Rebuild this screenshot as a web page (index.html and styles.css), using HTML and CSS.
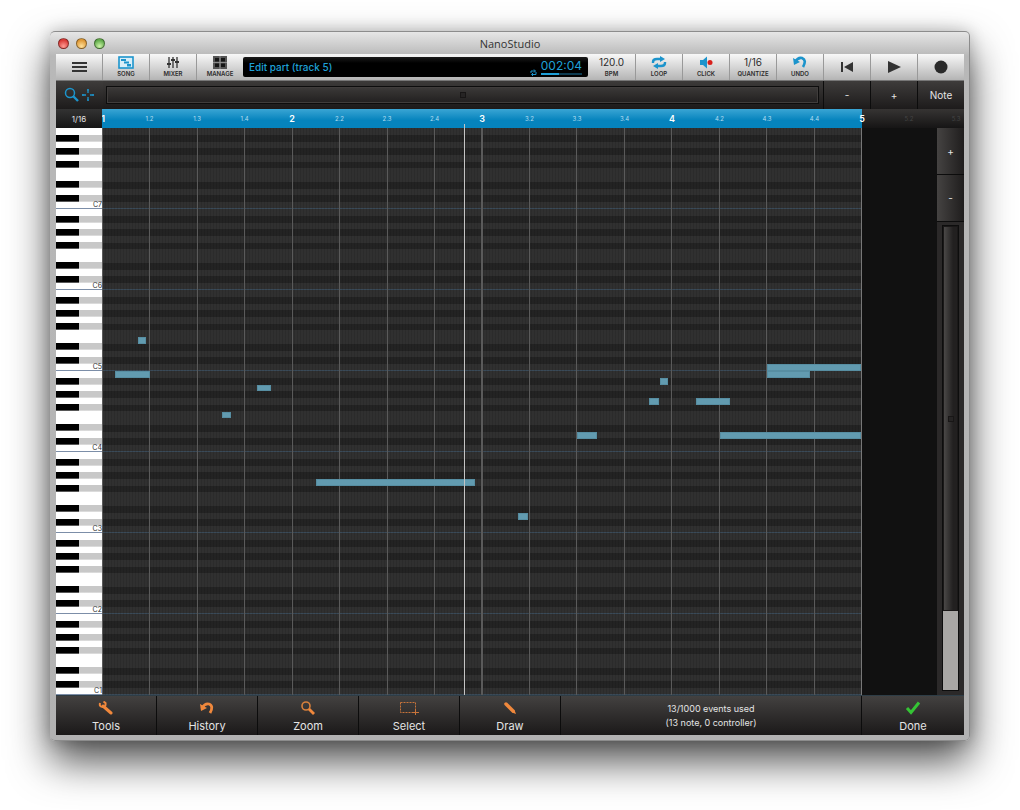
FILE: index.html
```html
<!DOCTYPE html>
<html lang="en">
<head>
    <meta charset="UTF-8">
    <meta name="viewport" content="width=device-width, initial-scale=1.0">
    <title>NanoStudio</title>
    <link rel="stylesheet" href="styles.css">
</head>
<body>

    <div class="window">
        <header class="titlebar">
            <div class="lights">
                <button class="light red" aria-label="Close"></button>
                <button class="light amber" aria-label="Minimise"></button>
                <button class="light green" aria-label="Zoom window"></button>
            </div>
            <h1>NanoStudio</h1>
        </header>

        <main class="app">
            <div class="toolbar">
                <button class="tool" aria-label="Menu">
                    <svg width="15" height="12" viewBox="0 0 15 12"><path d="M0 2h15M0 6h15M0 10h15" stroke="#333" stroke-width="2"/></svg>
                </button>
                <button class="tool">
                    <svg width="16" height="13" viewBox="0 0 16 13"><rect x="1" y="1" width="14" height="11" fill="#d8eef8" stroke="#1c94cc" stroke-width="1.6"/><path d="M3 3h5v2h-5zM6 5.500h5v2h-5zM9 8h4v2.500h-4z" fill="#1c94cc"/></svg>
                    <span>SONG</span>
                </button>
                <button class="tool">
                    <svg width="12" height="13" viewBox="0 0 12 13"><path d="M2 1v11M6 1v11M10 1v11" stroke="#333" stroke-width="1.300"/><path d="M0 8h4M4 4h4M8 6h4" stroke="#333" stroke-width="2"/></svg>
                    <span>MIXER</span>
                </button>
                <button class="tool">
                    <svg width="14" height="13" viewBox="0 0 14 13"><rect width="14" height="13" fill="#555"/><path d="M2 2h4v3.500H2zM8 2h4v3.500H8zM2 7.500h4V11H2zM8 7.500h4V11H8z" fill="#151515"/><path d="M7 0v13M0 6.500h14" stroke="#999" stroke-width=".8"/></svg>
                    <span>MANAGE</span>
                </button>
                <div class="display">
                    <span class="status">Edit part (track 5)</span>
                    <svg class="sync" width="7" height="7" viewBox="0 0 7 7"><path d="M1 4V2h4M4 .5 5.500 2 4 3.500M6 3v2.500H2M3 4 1.500 5.500 3 7" fill="none" stroke="#1c94cc"/></svg>
                    <div class="clock">
                        <span>002:04</span>
                        <div class="beat"><div class="beat-fill"></div></div>
                    </div>
                </div>
                <button class="tool"><b>120.0</b><span>BPM</span></button>
                <button class="tool">
                    <svg width="16" height="13" viewBox="0 0 16 13"><path d="M2 7V6q0-3 4-3h4M14 6v1q0 3-4 3H6" fill="none" stroke="#1c94cc" stroke-width="2.400"/><path d="M9 0l5 3-5 3zM7 7l-5 3 5 3z" fill="#1c94cc"/></svg>
                    <span>LOOP</span>
                </button>
                <button class="tool">
                    <svg width="14" height="13" viewBox="0 0 14 13"><path d="M1 4h3l4-3.500v12L4 9H1z" fill="#1c94cc"/><circle cx="11" cy="6.500" r="2.500" fill="#d8201c"/></svg>
                    <span>CLICK</span>
                </button>
                <button class="tool"><b>1/16</b><span>QUANTIZE</span></button>
                <button class="tool">
                    <svg width="14" height="13" viewBox="0 0 14 13"><path d="M2 6q3-5 7-4 5 2 1 9" fill="none" stroke="#1c94cc" stroke-width="2.600"/><path d="M0 2l1 7 6-3z" fill="#1c94cc"/></svg>
                    <span>UNDO</span>
                </button>
                <button class="tool" aria-label="Rewind">
                    <svg width="12" height="12" viewBox="0 0 12 12"><path d="M0 1h2v10H0zM12 1v10L3 6z" fill="#333"/></svg>
                </button>
                <button class="tool" aria-label="Play">
                    <svg width="13" height="12" viewBox="0 0 13 12"><path d="M0 0v12l13-6z" fill="#333"/></svg>
                </button>
                <button class="tool" aria-label="Record">
                    <svg width="14" height="14" viewBox="0 0 14 14"><circle cx="7" cy="7" r="6.500" fill="#2a2a2a"/></svg>
                </button>
            </div>

            <div class="scrollrow">
                <button class="dark-button corner" aria-label="Zoom and pan">
                    <svg width="32" height="16" viewBox="0 0 32 16" fill="none" stroke="#1c94cc"><circle cx="6" cy="6" r="4.500" stroke-width="1.500"/><path d="M9 9l5 5" stroke-width="2.400"/><path d="M18 8h4M26 8h4M24 2v4M24 10v4" stroke-width="1.300"/><path d="M19 7v2M29 7v2M23 3h2M23 13h2"/></svg>
                </button>
                <div class="hscroll"><div class="hthumb"><i class="grip"></i></div></div>
                <button class="dark-button">-</button>
                <button class="dark-button">+</button>
                <button class="dark-button">Note</button>
            </div>

            <div class="ruler">
                <button class="snap">1/16</button>
                <div class="timeline">
                    <span class="bar first">1</span><span>1.2</span><span>1.3</span><span>1.4</span>
                    <span class="bar">2</span><span>2.2</span><span>2.3</span><span>2.4</span>
                    <span class="bar">3</span><span>3.2</span><span>3.3</span><span>3.4</span>
                    <span class="bar">4</span><span>4.2</span><span>4.3</span><span>4.4</span>
                </div>
                <div class="timeline-end">
                    <span class="bar">5</span><span>5.2</span><span>5.3</span>
                </div>
            </div>

            <div class="editor">
                <div class="piano">
                    <div class="octave">C7</div>
                    <div class="octave">C6</div>
                    <div class="octave">C5</div>
                    <div class="octave">C4</div>
                    <div class="octave">C3</div>
                    <div class="octave">C2</div>
                    <div class="octave">C1</div>
                </div>
                <!-- 84 semitone rows, 192 ticks to the bar -->
                <div class="roll">
                    <div class="note" style="--start: 36; --length: 9; --row: 31"></div>
                    <div class="note" style="--start: 13; --length: 36; --row: 36"></div>
                    <div class="note" style="--start: 121; --length: 10; --row: 42"></div>
                    <div class="note" style="--start: 157; --length: 14; --row: 38"></div>
                    <div class="note" style="--start: 217; --length: 160; --row: 52"></div>
                    <div class="note" style="--start: 421; --length: 10; --row: 57"></div>
                    <div class="note" style="--start: 481; --length: 20; --row: 45"></div>
                    <div class="note" style="--start: 553; --length: 11; --row: 40"></div>
                    <div class="note" style="--start: 565; --length: 8; --row: 37"></div>
                    <div class="note" style="--start: 601; --length: 34; --row: 40"></div>
                    <div class="note" style="--start: 673; --length: 95; --row: 35"></div>
                    <div class="note" style="--start: 673; --length: 43; --row: 36"></div>
                    <div class="note" style="--start: 625; --length: 143; --row: 45"></div>
                    <div class="playhead" style="--start: 366"></div>
                </div>
                <div class="side">
                    <button class="side-button">+</button>
                    <button class="side-button">-</button>
                    <div class="vscroll"><div class="vthumb"><i class="grip"></i></div></div>
                </div>
            </div>

            <footer class="footer">
                <button class="action">
                    <svg width="16" height="14" viewBox="0 0 16 14"><path d="M5 5l8 7" stroke="#f0883c" stroke-width="3" stroke-linecap="round"/><path d="M2 2q-1 4 3 4 3 0 2.500-4L5.500.5" fill="none" stroke="#f0883c" stroke-width="2"/></svg>
                    <span>Tools</span>
                </button>
                <button class="action">
                    <svg width="16" height="14" viewBox="0 0 16 14"><path d="M3 7q3-5 7-4 5 2 1 9" fill="none" stroke="#f0883c" stroke-width="2.800"/><path d="M1 3l1 7 6-3z" fill="#f0883c"/></svg>
                    <span>History</span>
                </button>
                <button class="action">
                    <svg width="16" height="14" viewBox="0 0 16 14"><circle cx="6" cy="5" r="4" fill="none" stroke="#d8803c" stroke-width="1.600"/><path d="M9 8l5 5" stroke="#f0883c" stroke-width="2.800"/></svg>
                    <span>Zoom</span>
                </button>
                <button class="action">
                    <svg width="20" height="14" viewBox="0 0 20 14" fill="none" stroke="#c8743a"><path d="M1.500 1.500h15v10h-15z" stroke-dasharray="2 1"/><path d="M16.500 8v6M13 11.500h7"/></svg>
                    <span>Select</span>
                </button>
                <button class="action">
                    <svg width="14" height="14" viewBox="0 0 14 14"><path d="M3 3l7 7" stroke="#f0883c" stroke-width="3.500" stroke-linecap="round"/><path d="M9 11.500l2.500-2.500 1.500 4z" fill="#f0883c"/></svg>
                    <span>Draw</span>
                </button>
                <p class="usage">13/1000 events used<br>(13 note, 0 controller)</p>
                <button class="action">
                    <svg width="16" height="14" viewBox="0 0 16 14"><path d="M2 7l4 4.500L14 1.500" fill="none" stroke="#35c435" stroke-width="3"/></svg>
                    <span>Done</span>
                </button>
            </footer>
        </main>
    </div>

</body>
</html>
```
FILE: styles.css
```css
* {
    box-sizing: border-box;
}
body {
    margin: 0;
    padding: 31px 50px 69px;
    background: #fff;
    font-family: Inter, "Liberation Sans", sans-serif;
    color: #e4e4e4;
    height: 100vh;
    overflow: hidden;
}
button {
    border: 0;
    margin: 0;
    padding: 0;
    font-family: inherit;
    color: inherit;
}
svg {
    display: block;
}
.window {
    display: flex;
    flex-direction: column;
    height: 100%;
    padding: 0 5px 5px 6px;
    border: 1px solid #8c8c8c;
    border-width: 1px 1px 1px 0;
    border-radius: 5px;
    background: linear-gradient(#e6e6e6, #b8b8b8 24px, #b2b2b2);
    box-shadow: 0 20px 40px rgba(0, 0, 0, 0.7), 0 0 16px rgba(0, 0, 0, 0.2);
}

/* title bar */
.titlebar {
    display: grid;
    grid-template-columns: 1fr auto 1fr;
    align-items: center;
    height: 22px;
    flex: none;
}
.titlebar h1 {
    margin: 0;
    font: 11px "Open Sans", sans-serif;
    color: #333;
}
.lights {
    display: flex;
    gap: 7px;
    padding-left: 2px;
}
.light {
    width: 11px;
    height: 11px;
    border-radius: 50%;
    border: 1px solid rgba(0, 0, 0, 0.4);
}
.red {
    background: radial-gradient(circle at 50% 80%, #ff9c94, #d93c38 70%);
}
.amber {
    background: radial-gradient(circle at 50% 80%, #ffe09a, #e09a38 70%);
}
.green {
    background: radial-gradient(circle at 50% 80%, #cdf5a8, #62ac4c 70%);
}

.app {
    display: flex;
    flex-direction: column;
    flex: 1;
    min-height: 0;
    background: #111;
}

/* transport */
.toolbar {
    display: flex;
    height: 27px;
    flex: none;
    background: linear-gradient(#f8f8f8, #b4b4b4);
    border-bottom: 1px solid #777;
}
.tool {
    display: flex;
    flex-direction: column;
    align-items: center;
    justify-content: center;
    gap: 1px;
    width: 47px;
    background: none;
    border-left: 1px solid #999;
    color: #2c2c2c;
}
.tool:first-child {
    width: 46px;
    border-left: 0;
}
.display + .tool {
    border-left: 0;
}
.tool span {
    font-size: 6px;
    line-height: 8px;
    font-weight: 600;
}
.tool b {
    font-size: 10px;
    line-height: 13px;
    font-weight: 400;
}
.display {
    display: flex;
    align-items: center;
    flex: 1;
    margin: 3px 0;
    padding: 0 6px;
    border-radius: 2px;
    background: linear-gradient(#1c1c1c, #000 30%);
    color: #1fa0d8;
}
.status {
    flex: 1;
    font-size: 10px;
    font-weight: 500;
}
.sync {
    align-self: flex-end;
    margin: 0 4px 1px 0;
}
.clock {
    font-size: 12px;
    line-height: 14px;
}
.beat {
    height: 2px;
    background: #0c3a50;
}
.beat-fill {
    width: 45%;
    height: 2px;
    background: #1fa0d8;
}

/* horizontal scroll and zoom */
.scrollrow {
    display: flex;
    height: 28px;
    flex: none;
    background: linear-gradient(#3c3a39, #1c1a1a);
}
.dark-button {
    display: flex;
    align-items: center;
    justify-content: center;
    width: 47px;
    background: linear-gradient(#3e3c3b, #1d1b1b);
    border-left: 1px solid #0c0c0c;
    font-size: 10px;
}
.corner {
    border-left: 0;
}
.hscroll {
    flex: 1;
    margin: 5px 4px 5px 3px;
    border: 1px solid #0d0d0d;
}
.hthumb {
    display: flex;
    align-items: center;
    justify-content: center;
    height: 100%;
    border: 1px solid #403d3c;
    background: linear-gradient(#3a3837, #232121);
}
.grip {
    width: 6px;
    height: 6px;
    border: 1px solid #181616;
    background: #262424;
}

/* ruler */
.ruler {
    display: flex;
    height: 19px;
    flex: none;
    line-height: 19px;
    font-size: 6px;
}
.snap {
    width: 46px;
    background: linear-gradient(#333, #161616);
    font-size: 8px;
}
.timeline,
.timeline-end {
    display: grid;
}
.timeline {
    flex: 1;
    grid-template-columns: repeat(16, minmax(0, 1fr));
    background: linear-gradient(#3aa5d4, #0583bd 60%);
    color: #b4ddf0;
}
.timeline-end {
    width: 102px;
    grid-template-columns: 47px 47px 8px;
    background: linear-gradient(#363433, #161515);
    color: #444;
}
.timeline span,
.timeline-end span {
    display: flex;
    justify-content: center;
    width: 0;
}
.ruler .bar {
    font-size: 9px;
    font-weight: 600;
    color: #fff;
    z-index: 1;
}
.ruler .first {
    justify-content: flex-end;
    width: 3px;
    overflow: hidden;
}

/* piano roll */
.editor {
    display: flex;
    flex: 1;
    min-height: 0;
}
.piano {
    display: flex;
    flex-direction: column;
    width: 46px;
    background: #fff;
}
.octave {
    display: flex;
    align-items: flex-end;
    justify-content: flex-end;
    flex: 1;
    border-bottom: 1px solid #7c8ea8;
    color: #333;
    font-size: 7px;
    line-height: 7px;
    --key: linear-gradient(to right, #000 50%, #c8c8c8 50%);
    background:
        var(--key) 0 9.090% / 100% 8.333% no-repeat,
        var(--key) 0 27.272% / 100% 8.333% no-repeat,
        var(--key) 0 45.454% / 100% 8.333% no-repeat,
        var(--key) 0 72.727% / 100% 8.333% no-repeat,
        var(--key) 0 90.909% / 100% 8.333% no-repeat;
}
.roll {
    position: relative;
    flex: 1;
    border-right: 1px solid #777;
    background:
        repeating-linear-gradient(to right, #5a5a5a 0 1px, transparent 1px calc(100% / 16)),
        repeating-linear-gradient(to right, rgba(0, 0, 0, 0.1) 0 1px, transparent 1px 3px),
        repeating-linear-gradient(transparent 0 calc(100% / 7 - 1px), #3a4a58 calc(100% / 7 - 1px) calc(100% / 7)),
        linear-gradient(
            #303030 8.333%, #232323 8.333% 16.667%,
            #303030 16.667% 25%, #232323 25% 33.333%,
            #303030 33.333% 41.667%, #232323 41.667% 50%,
            #303030 50% 66.667%, #232323 66.667% 75%,
            #303030 75% 83.333%, #232323 83.333% 91.667%,
            #303030 91.667%) 0 0 / 100% calc(100% / 7);
}
.note {
    position: absolute;
    left: calc(var(--start) * 100% / 768);
    top: calc(var(--row) * 100% / 84);
    width: calc(var(--length) * 100% / 768);
    height: calc(100% / 84);
    border: 1px solid #578ea2;
    background: #629bb0;
}
.playhead {
    position: absolute;
    left: calc(var(--start) * 100% / 768);
    top: -4px;
    bottom: 0;
    width: 1px;
    background: #c4c4c4;
}
.side {
    display: flex;
    flex-direction: column;
    width: 27px;
    margin-left: 75px;
    background: #2b2929;
}
.side-button {
    height: 47px;
    flex: none;
    border-bottom: 1px solid #0c0c0c;
    background: linear-gradient(to right, #454342, #1f1d1d);
    font-size: 10px;
}
.vscroll {
    flex: 1;
    margin: 3px 5px 4px;
    border: 1px solid #0d0d0d;
    background: #a9a7a5;
}
.vthumb {
    display: flex;
    align-items: center;
    justify-content: center;
    height: 83%;
    border: 1px solid #1a1818;
    background: linear-gradient(to right, #4a4847, #222020 70%);
}

/* bottom actions */
.footer {
    display: flex;
    height: 40px;
    flex: none;
    border-top: 1px solid #2e3d46;
    background: linear-gradient(#434140, #1b1919);
}
.action {
    display: flex;
    flex-direction: column;
    align-items: center;
    gap: 3px;
    width: 101px;
    padding-top: 5px;
    border-right: 1px solid #0c0c0c;
    background: none;
    font-size: 11px;
    line-height: 16px;
}
.action:last-child {
    width: 102px;
    border-right: 0;
}
.usage {
    flex: 1;
    margin: 0;
    padding-top: 6px;
    border-right: 1px solid #0c0c0c;
    text-align: center;
    font-size: 9px;
    line-height: 14px;
}
```
